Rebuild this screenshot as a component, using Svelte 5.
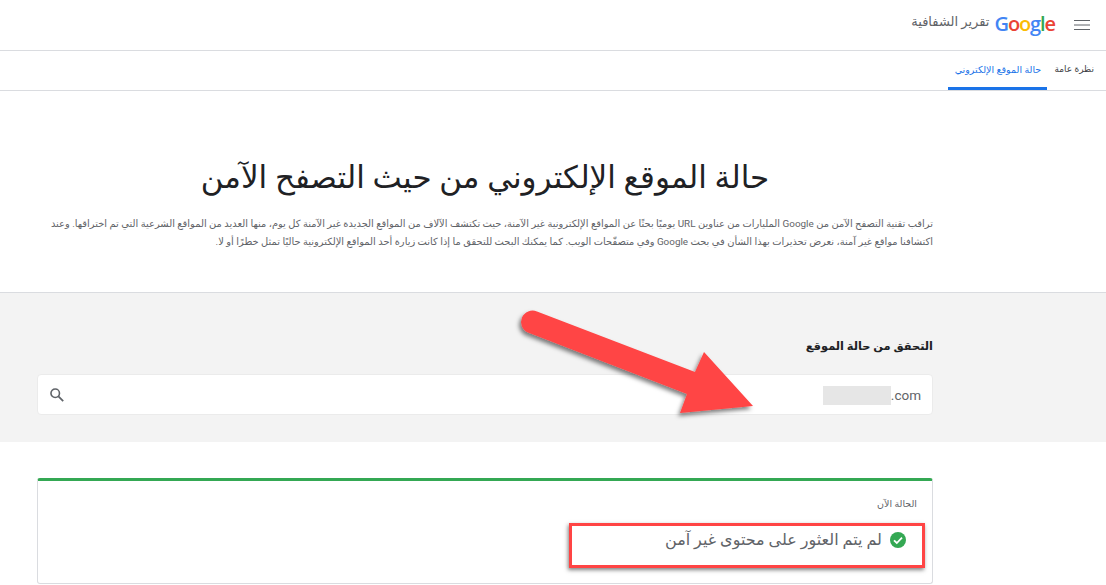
<script>
	const googleLetters = [
		{ ch: 'G', color: '#4285f4' },
		{ ch: 'o', color: '#ea4335' },
		{ ch: 'o', color: '#fbbc05' },
		{ ch: 'g', color: '#4285f4' },
		{ ch: 'l', color: '#34a853' },
		{ ch: 'e', color: '#ea4335' }
	];
</script>

<div class="page" dir="rtl">
	<header class="topbar">
		<svg class="menu" width="16" height="12" viewBox="0 0 16 12" aria-hidden="true">
			<path d="M0 1.5h16M0 6h16M0 10.5h16" stroke="#5f6368" stroke-width="1" fill="none" />
		</svg>
		<span class="logo" dir="ltr">
			{#each googleLetters as l}<span style="color: {l.color}">{l.ch}</span>{/each}
		</span>
		<span class="product">تقرير الشفافية</span>
	</header>

	<nav class="tabs">
		<span class="tab">نظرة عامة</span>
		<span class="tab active">حالة الموقع الإلكتروني</span>
	</nav>

	<section class="hero">
		<h1>حالة الموقع الإلكتروني من حيث التصفح الآمن</h1>
		<p>
			تراقب تقنية التصفح الآمن من Google المليارات من عناوين URL يوميًا بحثًا عن المواقع الإلكترونية غير الآمنة، حيث تكتشف الآلاف من المواقع الجديدة غير الآمنة كل يوم، منها العديد من المواقع الشرعية التي تم اختراقها. وعند اكتشافنا مواقع غير آمنة، نعرض تحذيرات بهذا الشأن في بحث Google وفي متصفّحات الويب. كما يمكنك البحث للتحقق ما إذا كانت زيارة أحد المواقع الإلكترونية حاليًا تمثل خطرًا أو لا.
		</p>
	</section>

	<section class="check">
		<h2>التحقق من حالة الموقع</h2>
		<div class="search">
			<span class="domain" dir="ltr">exampleo.com</span>
			<span class="blur"></span>
			<svg width="16" height="16" viewBox="0 0 18 18" aria-hidden="true">
				<circle cx="7" cy="7" r="4.8" fill="none" stroke="#5f6368" stroke-width="1.8" />
				<path d="M10.6 10.6 16 16" stroke="#5f6368" stroke-width="2" fill="none" />
			</svg>
		</div>
	</section>

	<section class="result">
		<div class="card">
			<div class="label">الحالة الآن</div>
			<div class="status">
				<svg width="16" height="16" viewBox="0 0 16 16" aria-hidden="true">
					<circle cx="8" cy="8" r="8" fill="#34a853" />
					<path d="M4 8.300 6.800 11 12 5.600" fill="none" stroke="#fff" stroke-width="1.800" />
				</svg>
				<span>لم يتم العثور على محتوى غير آمن</span>
			</div>
		</div>
		<div class="highlight"></div>
	</section>

	<svg class="arrow" width="1106" height="585" viewBox="0 0 1106 585" aria-hidden="true">
		<defs>
			<filter id="sh" x="-10%" y="-10%" width="125%" height="130%">
				<feDropShadow dx="-2" dy="3" stdDeviation="2" flood-color="#000" flood-opacity="0.5" />
			</filter>
		</defs>
		<path
			filter="url(#sh)"
			fill="#ff4444"
			d="M537 311.500 L695 372 L704 352 L753 406 L680 413 L687 394 L528 332.500 A11 11 0 0 1 537 311.500 Z"
		/>
	</svg>
</div>

<style>
	:global(body) {
		margin: 0;
		background: #fff;
	}

	.page {
		position: relative;
		width: 1106px;
		height: 585px;
		overflow: hidden;
		font-family: Roboto, "DejaVu Sans", sans-serif;
		color: #3c4043;
	}

	.topbar {
		height: 51px;
		box-sizing: border-box;
		border-bottom: 1px solid #dadce0;
		display: flex;
		align-items: center;
		padding-right: 16px;
	}

	.menu {
		margin-left: 19px;
	}

	.logo {
		font-family: "Open Sans", Roboto, sans-serif;
		font-size: 20px;
		font-weight: 600;
		letter-spacing: -1.1px;
		margin: 0 0 3px 5px;
	}

	.product {
		font-size: 13px;
		color: #5f6368;
		margin-bottom: 8px;
	}

	.tabs {
		height: 40px;
		box-sizing: border-box;
		border-bottom: 1px solid #dadce0;
		display: flex;
		padding-right: 12px;
	}

	.tab {
		font-size: 9px;
		line-height: 37px;
		padding: 0 0 0 7px;
		color: #3c4043;
	}

	.tab.active {
		width: 99px;
		box-sizing: border-box;
		height: 39px;
		padding: 0;
		font-size: 9.500px;
		text-align: center;
		color: #1a73e8;
		border-bottom: 3px solid #1a73e8;
	}

	.hero {
		height: 201px;
		box-sizing: border-box;
		padding: 0 173px 0 37px;
		text-align: center;
	}

	h1 {
		margin: 0;
		padding-top: 65px;
		font-size: 31px;
		line-height: 44px;
		font-weight: 400;
		color: #202124;
	}

	.hero p {
		margin: 15px 0 0;
		font-size: 9.900px;
		line-height: 18px;
		color: #5f6368;
		text-align: right;
	}

	.check {
		height: 150px;
		box-sizing: border-box;
		background: #f3f3f3;
		border-top: 1px solid #dadce0;
		padding: 44px 173px 0 37px;
	}

	h2 {
		margin: 0 0 19px;
		font-size: 11.400px;
		line-height: 18px;
		font-weight: 700;
		color: #202124;
	}

	.search {
		position: relative;
		height: 41px;
		box-sizing: border-box;
		background: #fff;
		border: 1px solid #ebebeb;
		border-radius: 4px;
		display: flex;
		align-items: center;
		justify-content: space-between;
		padding: 0 11px;
		font-size: 13.500px;
		color: #5f6368;
	}

	.blur {
		position: absolute;
		right: 41px;
		top: 11px;
		width: 68px;
		height: 19px;
		background: #e6e6e6;
	}

	.result {
		position: relative;
		padding: 36px 173px 0 37px;
	}

	.card {
		height: 106px;
		box-sizing: border-box;
		border: 1px solid #dadce0;
		border-top: 3px solid #34a853;
		border-radius: 3px;
		padding: 15px 15px 0;
	}

	.label {
		font-size: 9.500px;
		line-height: 16px;
		color: #5f6368;
	}

	.status {
		display: flex;
		align-items: center;
		gap: 8px;
		margin: 17px 11px 0 0;
		font-size: 16px;
		line-height: 22px;
		color: #5f6368;
	}

	.highlight {
		position: absolute;
		top: 81px;
		right: 181px;
		width: 350px;
		height: 39px;
		border: 3px solid #ff4444;
		box-shadow: -1px 2px 4px rgba(0, 0, 0, 0.5);
	}

	.arrow {
		position: absolute;
		left: 0;
		top: 0;
		pointer-events: none;
	}
</style>
